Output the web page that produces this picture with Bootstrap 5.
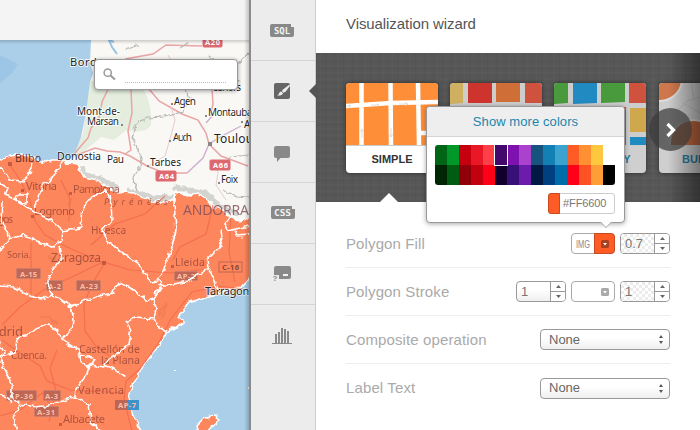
<!DOCTYPE html>
<html lang="en">
<head>
<meta charset="utf-8">
<meta name="viewport" content="width=device-width, initial-scale=1">
<title>Visualization wizard</title>
<link href="https://cdn.jsdelivr.net/npm/bootstrap@5.3.0/dist/css/bootstrap.min.css" rel="stylesheet">
<style>
body{width:700px;height:430px;font-family:"Liberation Sans",Arial,sans-serif;font-size:13px;color:#666;line-height:1.2}
.map-pane{width:249px;height:430px}
.map-top{height:40px;background:#f4f4f4}
.map-shadow{height:4px;background:linear-gradient(rgba(0,0,0,.18),transparent);top:40px}
.edge-shadow{width:5px;background:linear-gradient(to left,rgba(0,0,0,.2),transparent)}
.map-svg text{font-family:"Noto Sans","Open Sans",sans-serif}
.search-box{left:94px;top:59px;width:144px;height:31px;background:#fff;border:1px solid #999;border-radius:4px;box-shadow:0 1px 4px rgba(0,0,0,.4);padding:0 11px 0 8px}
.search-line{height:1px;background:repeating-linear-gradient(90deg,#bbb 0 1px,transparent 1px 2px);margin:15px 0 0 9px}
.tool-rail{width:67px;background:#ececec;border-left:2px solid #8b8b8b;border-right:1px solid #ccc}
.tool-item{height:61px;padding-right:2px;border-bottom:1px solid #d5d5d5;color:#898989}
.tool-item:last-child{border:0}
.tool-item.active{color:#666}
.tool-item.active::after{content:"";position:absolute;right:-1px;top:23px;border:7px solid transparent;border-left:0;border-right-color:#555}
.css-ico{margin:0 0 1px 2px}
.wizard{background:#fff;width:384px}
.wizard-title{height:53px;padding:0 0 6px 30px;font-size:15px;letter-spacing:-.08px;color:#555}
.strip{height:149px;background-color:#575757;background-image:repeating-linear-gradient(0deg,rgba(0,0,0,.035) 0 1px,transparent 1px 3px,rgba(255,255,255,.02) 3px 4px,transparent 4px 7px),repeating-linear-gradient(90deg,rgba(0,0,0,.035) 0 1px,transparent 1px 4px,rgba(255,255,255,.02) 4px 5px,transparent 5px 9px);padding:30px 0 0 30px;gap:12px}
.thumb{width:92px;height:90px;border-radius:4px;background:#fff;box-shadow:0 0 5px rgba(0,0,0,.45);color:#333;font-weight:700;font-size:11px}
.thumb.off{background:#cfcfcf;color:#247b9c}
.thumb.end-thumb{margin-left:1px}
.thumb svg{height:62px;width:92px}
.thumb-label{height:28px;border-top:1px solid #ccc;padding-top:1px}
.strip-fade{width:32px;background:linear-gradient(90deg,transparent,rgba(0,0,0,.42))}
.next-btn{left:333px;top:55px;width:43px;height:43px;background:rgba(60,60,60,.72)}
.strip-caret{left:64px;bottom:0;border:9px solid transparent;border-top:0;border-bottom-color:#fff}
.options{padding:18px 30px 0}
.option{height:48px;border-bottom:1px solid #eee;color:#aaa;font-size:15px;letter-spacing:.12px}
.option:last-child{border:0}
.ctl{height:21px;border:1px solid #999;border-radius:4px;font-size:13px;letter-spacing:0;color:#777;background:linear-gradient(#fff 40%,#efefef)}
.spin{width:50px}
.spin.c1{margin-right:5px}
.spin-value{width:34px;padding:1px 0 0 4px;border-right:1px solid #999}
.checks{background:repeating-conic-gradient(#ececec 0 25%,#fff 0 50%) 0 0/6px 6px}
.spin-arrows{width:14px;background:#fff}
.spin-arrows svg{width:14px;height:19px}
.fill-ctl{width:44px;margin-right:5px;border-color:#aaa;background:#fff}
.img-tag{width:22px}
.fill-swatch{width:21px;background:#ff5c25;border:1px solid #c94a21;margin:-1px -1px -1px 0;border-radius:0 4px 4px 0}
.drop-ico{width:8px;height:8px}
.stroke-drop{margin-right:5px}
.pick{width:130px;padding:0 6px 0 8px;color:#666}
.picker{left:426px;top:106px;width:199px;height:117px;background:#fff;border:1px solid #999;border-radius:4px;box-shadow:0 1px 5px rgba(0,0,0,.35)}
.picker-head{height:30px;background:#eee;border-bottom:1px solid #d4d4d4;border-radius:3px 3px 0 0;color:#1b86ac;font-size:13px;letter-spacing:.08px}
.swatches{width:180px;height:40px;margin:8px 0 0 8px;border-radius:3px;overflow:hidden}
.swatch{width:12px;height:20px}
.swatch.sel{outline:1px solid #fff;z-index:1}
.hex{width:67px;height:21px;margin:8px 0 0 121px;border:1px solid #ccc;border-radius:3px;font-size:11px;letter-spacing:-.1px;color:#777}
.hex-chip{width:12px;margin:-1px 3px -1px -1px;background:#ff5c25;border:1px solid #c94a21;border-radius:3px 0 0 3px}
.picker-caret{left:172px;bottom:-7px;width:14px;height:8px}
</style>
<script src="https://cdn.jsdelivr.net/npm/bootstrap@5.3.0/dist/js/bootstrap.bundle.min.js"></script>
</head>
<body class="d-flex overflow-hidden position-relative m-0">
<section class="map-pane position-relative flex-shrink-0 overflow-hidden">
<div class="map-top"></div>
<svg class="map-svg d-block" width="249" height="390" viewBox="0 40 249 390">
<defs><filter id="rough" x="-5%" y="-5%" width="110%" height="110%" color-interpolation-filters="sRGB"><feTurbulence type="fractalNoise" baseFrequency=".16" numOctaves="2" seed="4"/><feDisplacementMap in="SourceGraphic" scale="6" xChannelSelector="R" yChannelSelector="G"/></filter></defs>
<rect y="40" width="250" height="390" fill="#f9f8f5"/>
<path d="M90 80L106 88 140 86C149 94 152 111 151 125Q147 134 126 130L114 140 101 137 88 148 77 158 70 158 83 134z" fill="#e4edde"/>
<path d="M-2 40H91L90 63 93 73 90 82 86 113 81 137 75 153 67 161 0 168z" fill="#abcfe9"/><path d="M0 55L18 64 12 73 0 83z" fill="#9dc6e6"/>
<path d="M108 38L112 47 117 54M109 40L114 42" stroke="#94c4e7" stroke-width="2" fill="none"/>
<path d="M72 157L80 147 88 138 91 128 99 118 102 102 109 87M77 155L95 148 107 151 120 152 130 156 147 166 164 173 187 173M131 90L132 113 128 131 131 150 125 154M149 89L159 101 182 114 198 120 206 133 209 144 221 156 248 166M125 59L153 54 166 45 202 46M210 117L213 104 212 89" fill="none" stroke="#e9a5a5" stroke-width="1.5"/>
<path d="M187 173L203 158 209 144 222 136 241 126M206 123L213 115" fill="none" stroke="#cfafd0" stroke-width="1.4"/>
<path d="M168 55L175 67M171 107L175 120 170 139 165 156 150 165M214 160L218 173 216 185 226 200" fill="none" stroke="#e8cbd1"/>
<g filter="url(#rough)"><path d="M125 50L140 45M180 48L189 42M186 91L190 98 182 112 164 117 147 118 136 124 132 138 142 158 140 166 132 176 137 190 145 194M209 56L219 63 229 76 241 83M250 53L238 63M249 155L229 157 225 168M222 190L237 196 249 197" fill="none" stroke="#b7b7b4" stroke-width="1.2"/>
<path d="M81 166L83 174 101 179 118 188M127 190L154 198 173 197M174 188L205 192 217 204 239 215" fill="none" stroke="#d3d3cf" stroke-width="5"/></g>
<g fill="#1e1e1e" stroke="#fff" stroke-width="1.8" paint-order="stroke" stroke-opacity=".85">
<text x="70" y="66" font-size="11" textLength="54">Bordeaux</text><text x="77" y="115" font-size="10" textLength="43">Mont-de-</text><text x="87" y="125" font-size="10" textLength="32">Marsan</text><text x="174" y="105" font-size="10" textLength="22">Agen</text><text x="212" y="91" font-size="10" textLength="29">Cahors</text><text x="208" y="116" font-size="10" textLength="50">Montauban</text><text x="173" y="141" font-size="10" textLength="19">Auch</text><text x="214" y="143" font-size="12" textLength="52">Toulouse</text><text x="150" y="166" font-size="10" textLength="31">Tarbes</text><text x="221" y="183" font-size="10" textLength="17">Foix</text><text x="107" y="163" font-size="10" textLength="17">Pau</text><text x="244" y="128" font-size="10">Albi</text></g>
<g fill="#888"><path d="M208 142h4v4h-4zM169 140h2v2h-2zM147 165h2v2h-2zM218 182h2v2h-2zM205 115h2v2h-2zM171 103h2v2h-2zM241 121h2v2h-2zM121 124h2v2h-2z"/></g>
<g fill="#de6870" stroke="#de6870"><rect x="203" y="37" width="19" height="10" rx="1"/><rect x="210" y="160" width="20" height="10" rx="1"/><rect x="156" y="171" width="20" height="10" rx="1"/></g>
<g fill="#fff" font-size="7.5" font-weight="700"><text x="205" y="45" textLength="15">A20</text><text x="213" y="168" textLength="15">A66</text><text x="159" y="179" textLength="15">A64</text></g>
<path d="M250 274L243 286 218 293 202 298 188 303 178 317 184 322 175 329 168 332 158 347 145 363 135 380 129 393 130 405 134 418 143 432H250z" fill="#abcfe9"/>
<g filter="url(#rough)">
<path d="M-3 161L10 156 20 155 31 156 40 161 47 162 53 160 63 160 68 163 78 164 81 171 85 177 97 180 110 187 118 193 125 192 133 193 145 198 152 201 175 201V192L188 195 197 193 207 198 212 207 220 208 228 215 238 220 253 217V275L243 286 218 293 202 298 188 303 178 317 184 322 175 329 168 332 158 347 145 363 135 380 129 393 130 405 134 418 143 434H-5z" fill="#fe865d" stroke="#fff" stroke-width="1.6"/>
<path d="M197 426L200 423 205 418 217 416 218 421 210 428 207 433H199z" fill="#fe865d" stroke="#fff" stroke-width="1.5"/>
<path d="M170 326l8 1-5 4-4-1z" fill="#fff"/>
<path d="M48 256L56 260 50 265M95 185L103 197M160 310L166 305 162 317zM68 205l5-7M105 388l8 2M38 316l10 0 10 9" stroke="#ed7a4f" stroke-width="2" fill="none" opacity=".6"/>
</g>
<g fill="none" stroke="#ef6749" stroke-width="1.2" opacity=".75"><path d="M2 325L20 307 45 289 72 277 103 262 130 270 170 273 210 269M104 264L92 284 84 304 85 331 96 346 111 357M10 165L20 180 30 200 35 221 45 235 67 247 104 263M61 180L70 199 69 221M31 242L31 294M2 340L20 353 40 366 47 381 70 390 124 393M0 416L20 410 42 393 56 413M57 350L50 368 56 391 49 422M243 289L219 286 192 292 171 319 158 344 139 370 126 381 124 400 132 431M173 260L180 247 206 234 213 205M231 215L229 252 235 282M165 196L145 214 115 224 91 245"/></g>
<g fill="#1e1e1e" stroke="#fff" stroke-width="1.4" paint-order="stroke" stroke-opacity=".6"><text x="57" y="160" font-size="10.5" textLength="44">Donostia</text><text x="15" y="162" font-size="10.5" textLength="26" fill="#5e3329" stroke="none">Bilbo</text></g>
<g fill="#9a4636" opacity=".8"><text x="26" y="190" font-size="11" textLength="31">Vitoria</text><text x="73" y="193" font-size="11" textLength="47">Pamplona</text><text x="34" y="215" font-size="11" textLength="41">Logrono</text><text x="-15" y="223" font-size="10.5" textLength="28">Burgos</text><text x="91" y="234" font-size="10" textLength="35">Huesca</text><text x="7" y="258" font-size="9.5" textLength="24">Soria.</text><text x="51" y="262" font-size="12" textLength="50">Zaragoza</text><text x="175" y="266" font-size="10.5" textLength="30">Lleida</text><text x="-20" y="336" font-size="13" textLength="43">Madrid</text><text x="11" y="359" font-size="10" textLength="36">Cuenca.</text><text x="79" y="353" font-size="10.5" textLength="61">Castellón de</text><text x="101" y="364" font-size="10.5" textLength="39">la Plana</text><text x="78" y="394" font-size="11" textLength="46">Valencia</text><text x="63" y="423" font-size="11" textLength="42">Albacete</text><text x="104" y="205" font-size="9" font-style="italic" textLength="64">Pyrénées</text></g>
<text x="183" y="215" font-size="14" fill="#814f58" opacity=".8" textLength="66">ANDORRA</text>
<g fill="#a64636" opacity=".65"><path d="M102 261h4v4h-4zM8 162h4v4H8zM21 189h3v3h-3zM69 192h3v3h-3zM171 265h3v3h-3zM59 423h3v3h-3zM31 215h3v3h-3z"/></g>
<g fill="#bf6655" stroke="#cf7d6b"><rect x="16.500" y="268.500" width="24" height="10" rx="1"/><rect x="46.500" y="280.500" width="16" height="10" rx="1"/><rect x="76.500" y="280.500" width="24" height="10" rx="1"/><rect x="174.500" y="271.500" width="23" height="9" rx="1"/><rect x="6.500" y="390.500" width="30" height="10" rx="1"/><rect x="43.500" y="390.500" width="17" height="10" rx="1"/><rect x="34.500" y="406.500" width="24" height="10" rx="1"/></g>
<path d="M115 400h14v10h-14z" fill="#be6656"/><path d="M128 400h11v10h-11z" fill="#3e92cb"/><rect x="219" y="262" width="23" height="10" fill="none" stroke="#bd6550"/>
<g fill="#f9bfa8" font-size="7.500" font-weight="700"><text x="20" y="276.500" textLength="17">A-15</text><text x="48" y="288.500" textLength="13">A-2</text><text x="80" y="288.500" textLength="18">A-23</text><text x="177" y="279" textLength="18">AP-2</text><text x="9" y="398.500" textLength="24">AP-36</text><text x="45" y="398.500" textLength="13">A-3</text><text x="37" y="414.500" textLength="18">A-31</text><text x="118" y="408" textLength="18">AP-7</text></g>
<text x="222" y="270" font-size="7.500" font-weight="700" fill="#8f4638" textLength="17">C-16</text>
<text x="205" y="295" font-size="11" fill="#222" stroke="#fff" stroke-width="1.500" paint-order="stroke" stroke-opacity=".7" textLength="50">Tarragona</text>
<g filter="url(#rough)" fill="none" stroke="#fff" stroke-width="1.600" stroke-linejoin="round">
<path d="M-2 166L9 176 10 180 23 181 29 176 32 164M-2 182L8 188 5 195 14 199 24 205 34 212 49 219 63 231M3 202L2 221 10 239 23 235 38 242 53 247 62 241 63 231 81 228 83 208 92 197 107 190 111 204 112 220 103 230 107 241 123 253 138 263 145 274 151 282 158 281 163 271 171 250 176 230 174 201M63 160L50 182 42 185 38 200 34 208M15 199L16 195 27 195 27 203 17 201M10 239L-2 252M60 246L62 259 54 268 47 283 52 294 63 301 71 307 73 317 72 329 62 339M-2 286L15 287 29 296 42 299 52 294M70 307L81 302 99 296 113 293 119 282 126 285 147 300 154 299 155 291 160 289M-2 357L15 352 17 338 29 335 36 329 49 324 58 332 62 340 78 350 82 364 89 368 95 359 79 354M-2 341L4 351 1 363 12 384 12 397 20 404 35 407 44 406 59 402 75 397 76 389 87 374 89 365M126 377L115 369 104 365M89 365L104 367 108 359 120 352 128 345 131 330 127 322 135 317 154 319 160 327 168 332M154 319L156 308 153 299 161 287 160 279M158 286L174 284 189 281 203 272 207 269 214 278 218 290M209 270L208 259 218 249 222 238 221 229M232 214L225 224 227 231 249 226M235 230L237 236 251 235M20 404L14 418 17 432M75 397L89 404 91 423 103 432M-2 394L8 397 12 402"/>
</g>
<path d="M174 370h2v1h-2zM248 387h1v2h-1z" fill="#fff"/>
</svg>
<div class="map-shadow position-absolute start-0 w-100"></div>
<div class="edge-shadow position-absolute top-0 end-0 h-100"></div>
<div class="search-box position-absolute d-flex align-items-center">
<svg width="13" height="13" viewBox="0 0 13 13" fill="none" stroke="#999"><circle cx="4.700" cy="4.700" r="3.600" stroke-width="1.500"/><path d="M7.500 7.500l4.500 4" stroke-width="2"/></svg>
<div class="search-line flex-grow-1"></div>
</div>
</section>
<nav class="tool-rail flex-shrink-0 d-flex flex-column">
<div class="tool-item d-flex align-items-center justify-content-center"><svg width="24" height="13" viewBox="0 0 24 13"><path d="M2 0H21V3H24V11Q24 13 22 13H2Q0 13 0 11V2Q0 0 2 0z" fill="currentColor"/><text x="4" y="9.500" font-family="DejaVu Sans Mono,monospace" font-size="8" font-weight="700" fill="#f4f4f4" textLength="16" lengthAdjust="spacingAndGlyphs">SQL</text></svg></div>
<div class="tool-item active position-relative d-flex align-items-center justify-content-center"><svg width="16" height="16" viewBox="0 0 16 16"><rect width="16" height="16" rx="2" fill="currentColor"/><path d="M15.500 1.500L9 6.500 8 8.300 9.500 9.700 11.500 8.700 16 3z" fill="#ececec"/><path d="M7.300 8.500L9 10.200Q8 13 3 12.500 5 11.500 5.200 10 5.600 8.400 7.300 8.500z" fill="#ececec"/></svg></div>
<div class="tool-item d-flex align-items-center justify-content-center"><svg class="mt-1" width="16" height="16" viewBox="0 0 16 16"><path d="M2 0H14Q16 0 16 2V10Q16 12 14 12H6.500L3 16V12H2Q0 12 0 10V2Q0 0 2 0z" fill="currentColor"/></svg></div>
<div class="tool-item d-flex align-items-center justify-content-center"><svg class="css-ico" width="24" height="13" viewBox="0 0 24 13"><path d="M2 0H21V3H24V11Q24 13 22 13H2Q0 13 0 11V2Q0 0 2 0z" fill="currentColor"/><text x="3" y="9.500" font-family="DejaVu Sans Mono,monospace" font-size="8" font-weight="700" fill="#f4f4f4" textLength="17" lengthAdjust="spacingAndGlyphs">CSS</text></svg></div>
<div class="tool-item d-flex align-items-center justify-content-center"><svg width="18" height="16" viewBox="0 0 18 16"><path d="M3 0H16Q18 0 18 2V11Q18 13 16 13H6V9H1V2Q1 0 3 0z" fill="currentColor"/><path d="M10 8h5v2h-5z" fill="#f3f3f3"/><text x="-.5" y="15" font-family="Liberation Sans,sans-serif" font-size="8" font-weight="700" fill="currentColor">?</text></svg></div>
<div class="tool-item d-flex align-items-center justify-content-center"><svg width="20" height="16" viewBox="0 0 20 16" fill="currentColor"><path d="M0 15h20v1H0zM3 6h2v10H3zM6 4h2v12H6zM9 0h2v16H9zM12 1h2v15h-2zM15 3h2v13h-2z"/></svg></div>
</nav>
<main class="wizard flex-shrink-0">
<header class="wizard-title d-flex align-items-center">Visualization wizard</header>
<div class="strip position-relative d-flex overflow-hidden">
<div class="thumb flex-shrink-0 overflow-hidden"><svg class="d-block" viewBox="0 0 92 62"><path d="M0 0h92v62H0z" fill="#ff8e38"/><path d="M15.500 0V62M44.500 0L45 62M72 0L73 62M0 23L45 20 92 19M74 50H92" stroke="#fff" stroke-width="4.500" fill="none"/><path d="M0 23h5m-2-1.500l2 1.500-2 1.500M25 22h8m-2-1.500l2 1.500-2 1.500M53 21h9m-3-1.500l3 1.500-3 1.500M16 55v-9m-1.500 3l1.500-3 1.500 3M45 45v9m-1.500-3l1.500 3 1.500-3" stroke="#ddd" fill="none"/></svg><div class="thumb-label d-flex align-items-center justify-content-center">SIMPLE</div></div>
<div class="thumb off flex-shrink-0 overflow-hidden"><svg class="d-block" viewBox="0 0 92 62"><path d="M0 0h92v62H0z" fill="#cdcdcd"/><path d="M0 0h13v20L0 21z" fill="#cfb060"/><path d="M18 0h24v20H18z" fill="#ce342e"/><path d="M46 0h24v19H46z" fill="#cf6f37"/><path d="M75 0h17v20H75z" fill="#cf523f"/></svg><div class="thumb-label"></div></div>
<div class="thumb off flex-shrink-0 overflow-hidden"><svg class="d-block" viewBox="0 0 92 62"><path d="M0 0h92v62H0z" fill="#cdcdcd"/><path d="M0 0h14v20L0 21zM47 0h24v19L47 20z" fill="#489a3c"/><path d="M19 0h24v20l-24 1zM76 54h16v8H76z" fill="#218ac1"/><path d="M75 0h17v20H75zM70 24h2v38h-2z" fill="#cf523f"/><path d="M76 25h16v24H76z" fill="#cfa84d"/></svg><div class="thumb-label d-flex align-items-center justify-content-center">CATEGORY</div></div>
<div class="thumb off end-thumb flex-shrink-0 overflow-hidden"><svg class="d-block" viewBox="0 0 92 62"><path d="M0 0h92v62H0z" fill="#cdcdcd"/><path d="M18 28L28 18 45 13M24 20L41 30M32 0L35 16" stroke="#bdbdbd" fill="none"/><circle cx="1" cy="-4" r="22" fill="#cf774c" stroke="#ddd" stroke-width="2"/><circle cx="34" cy="60" r="23" fill="#bf683f" stroke="#ddd" stroke-width="2"/></svg><div class="thumb-label d-flex align-items-center justify-content-center">BUBBLE</div></div>
<div class="strip-fade position-absolute top-0 end-0 h-100"></div>
<div class="next-btn position-absolute rounded-circle d-flex align-items-center justify-content-center"><svg width="12" height="16" viewBox="0 0 12 16"><path d="M2.500 2L8.500 8 2.500 14" fill="none" stroke="#fff" stroke-width="3.200"/></svg></div>
<div class="strip-caret position-absolute"></div>
</div>
<div class="options">
<div class="option d-flex align-items-center"><span class="me-auto">Polygon Fill</span>
<div class="ctl fill-ctl d-flex"><span class="img-tag d-flex align-items-center justify-content-center"><svg width="16" height="12"><text x="1" y="9.500" font-size="10.500" fill="#888" textLength="14" lengthAdjust="spacingAndGlyphs">IMG</text></svg></span><span class="fill-swatch d-flex align-items-center justify-content-center"><svg class="drop-ico" viewBox="0 0 8 8"><rect width="8" height="8" rx="1.500" fill="#a9401e"/><path d="M2 3h4L4 5.500z" fill="#fff"/></svg></span></div>
<div class="ctl spin d-flex overflow-hidden"><span class="spin-value checks d-flex align-items-center">0.7</span><span class="spin-arrows"><svg class="d-block" viewBox="0 0 14 19"><path d="M0 9.500h14" stroke="#999"/><path d="M5 6h5L7.500 3zM5 13h5l-2.500 3z" fill="#666"/></svg></span></div></div>
<div class="option d-flex align-items-center"><span class="me-auto">Polygon Stroke</span>
<div class="ctl spin c1 d-flex overflow-hidden"><span class="spin-value d-flex align-items-center">1</span><span class="spin-arrows"><svg class="d-block" viewBox="0 0 14 19"><path d="M0 9.500h14" stroke="#999"/><path d="M5 6h5L7.500 3zM5 13h5l-2.500 3z" fill="#666"/></svg></span></div>
<div class="ctl fill-ctl d-flex align-items-center justify-content-end"><svg class="drop-ico stroke-drop" viewBox="0 0 8 8"><rect width="8" height="8" rx="1.500" fill="#aaa"/><path d="M2 3h4L4 5.500z" fill="#fff"/></svg></div>
<div class="ctl spin d-flex overflow-hidden"><span class="spin-value checks d-flex align-items-center">1</span><span class="spin-arrows"><svg class="d-block" viewBox="0 0 14 19"><path d="M0 9.500h14" stroke="#999"/><path d="M5 6h5L7.500 3zM5 13h5l-2.500 3z" fill="#666"/></svg></span></div></div>
<div class="option d-flex align-items-center"><span class="me-auto">Composite operation</span><div class="ctl pick d-flex align-items-center justify-content-between"><span>None</span><svg width="4" height="9" viewBox="0 0 4 9"><path d="M0 3h4L2 0zM0 6h4L2 9z" fill="#555"/></svg></div></div>
<div class="option d-flex align-items-center"><span class="me-auto">Label Text</span><div class="ctl pick d-flex align-items-center justify-content-between"><span>None</span><svg width="4" height="9" viewBox="0 0 4 9"><path d="M0 3h4L2 0zM0 6h4L2 9z" fill="#555"/></svg></div></div>
</div>
</main>
<aside class="picker position-absolute">
<div class="picker-head d-flex align-items-center justify-content-center">Show more colors</div>
<div class="swatches d-flex flex-wrap" id="swatches"></div>
<div class="hex d-flex align-items-stretch"><span class="hex-chip"></span><span class="align-self-center">#FF6600</span></div>
<svg class="picker-caret position-absolute" viewBox="0 0 14 8"><path d="M1 0L7 6 13 0z" fill="#fff"/><path d="M1 1L7 6.500 13 1" fill="none" stroke="#aaa"/></svg>
</aside>
<script>
const palette=["#006616","#009929","#c7000f","#ea1826","#ff4048","#43086c","#7f12ae","#ab42ce","#17537f","#1380b4","#3ba3cd","#ff5c25","#ff9132","#ffc740","#ffffff",
"#002604","#005c13","#8f0009","#c2000e","#ff0019","#11002e","#390f78","#6d1bad","#001a43","#004080","#006caa","#ff0018","#ff5223","#ff9e36","#000000"];
document.getElementById("swatches").innerHTML=palette.map((c,i)=>`<span class="swatch${i===5?" sel position-relative":""}" style="background:${c}"></span>`).join("");
</script>
</body>
</html>
